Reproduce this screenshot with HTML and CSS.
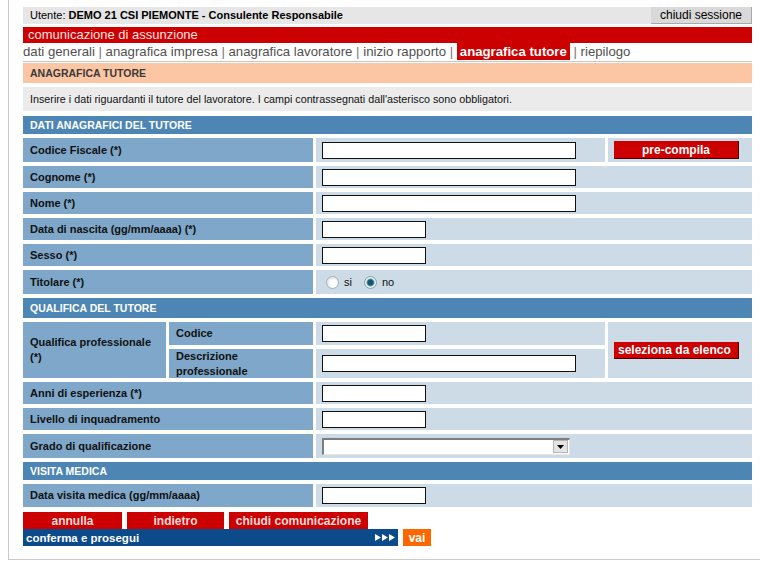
FILE: index.html
```html
<!DOCTYPE html>
<html lang="it">
<head>
<meta charset="utf-8">
<title>Anagrafica tutore</title>
<link rel="stylesheet" href="styles.css">
</head>
<body>
<div class="page">
  <div class="userbar">
    <span class="user">Utente: <b>DEMO 21 CSI PIEMONTE - Consulente Responsabile</b></span>
    <button class="btn-session" type="button">chiudi sessione</button>
  </div>
  <div class="titlebar">comunicazione di assunzione</div>
  <nav class="steps">dati generali <span class="sep">|</span> anagrafica impresa <span class="sep">|</span> anagrafica lavoratore <span class="sep">|</span> inizio rapporto <span class="sep">|</span> <span class="active">anagrafica tutore</span> <span class="sep">|</span> riepilogo</nav>
  <div class="section-title">ANAGRAFICA TUTORE</div>
  <div class="info">Inserire i dati riguardanti il tutore del lavoratore. I campi contrassegnati dall'asterisco sono obbligatori.</div>

  <div class="form">
    <div class="head">DATI ANAGRAFICI DEL TUTORE</div>

    <div class="lbl wide">Codice Fiscale (*)</div>
    <div class="val"><input class="in in-long" type="text"></div>
    <div class="val act"><button class="btn-red center" type="button">pre-compila</button></div>

    <div class="lbl wide">Cognome (*)</div>
    <div class="val full"><input class="in in-long" type="text"></div>

    <div class="lbl wide">Nome (*)</div>
    <div class="val full"><input class="in in-long" type="text"></div>

    <div class="lbl wide">Data di nascita (gg/mm/aaaa) (*)</div>
    <div class="val full"><input class="in in-short" type="text"></div>

    <div class="lbl wide">Sesso (*)</div>
    <div class="val full"><input class="in in-short" type="text"></div>

    <div class="lbl wide">Titolare (*)</div>
    <div class="val full radios">
      <label class="opt"><input class="radio" type="radio" name="tit"> si</label>
      <label class="opt"><input class="radio" type="radio" name="tit" checked> no</label>
    </div>

    <div class="head">QUALIFICA DEL TUTORE</div>

    <div class="lbl qual">Qualifica professionale (*)</div>
    <div class="lbl">Codice</div>
    <div class="val"><input class="in in-short" type="text"></div>
    <div class="val act qual-act"><button class="btn-red sel" type="button">seleziona da elenco</button></div>
    <div class="lbl">Descrizione professionale</div>
    <div class="val"><input class="in in-long" type="text"></div>

    <div class="lbl wide">Anni di esperienza (*)</div>
    <div class="val full"><input class="in in-short" type="text"></div>

    <div class="lbl wide">Livello di inquadramento</div>
    <div class="val full"><input class="in in-short" type="text"></div>

    <div class="lbl wide">Grado di qualificazione</div>
    <div class="val full">
      <div class="select">
        <span class="select-value"></span>
        <span class="select-arrow"><svg width="7" height="4" viewBox="0 0 7 4"><path d="M0 0H7L3.5 4Z" fill="#000"/></svg></span>
      </div>
    </div>

    <div class="head">VISITA MEDICA</div>

    <div class="lbl wide">Data visita medica (gg/mm/aaaa)</div>
    <div class="val full"><input class="in in-short" type="text"></div>
  </div>

  <div class="actions">
    <button class="btn-act w1" type="button">annulla</button>
    <button class="btn-act w2" type="button">indietro</button>
    <button class="btn-act w3" type="button">chiudi comunicazione</button>
  </div>
  <div class="submit">
    <div class="confirm">
      <span>conferma e prosegui</span>
      <svg class="arrows" width="21" height="7" viewBox="0 0 21 7"><path d="M0 0L6 3.5L0 7Z M7 0L13 3.5L7 7Z M14 0L20 3.5L14 7Z" fill="#fff"/></svg>
    </div>
    <button class="vai" type="button">vai</button>
  </div>
</div>
</body>
</html>
```

FILE: styles.css
```css
* { box-sizing: border-box; }

body {
  margin: 0;
  background: #fff;
  color: #000;
  font-family: "Liberation Sans", Arial, sans-serif;
}

.page {
  margin-left: 8px;
  width: 752px;
  border-left: 1px solid #cbcbcb;
  border-bottom: 1px solid #cbcbcb;
  padding: 7px 8px 13px 14px;
}

.userbar {
  display: flex;
  justify-content: space-between;
  height: 17px;
  background: #e6e6e6;
  font-size: 11px;
}

.user {
  padding-left: 7px;
  line-height: 17px;
}

.btn-session {
  width: 101px;
  height: 17px;
  padding: 0;
  border: 0;
  border-right: 1px solid #a9a9a9;
  border-bottom: 1px solid #a9a9a9;
  background: #d9d9d9;
  color: #000;
  font: 12px "Liberation Sans", Arial, sans-serif;
}

.titlebar {
  margin-top: 3px;
  height: 16px;
  line-height: 16px;
  padding-left: 5px;
  background: #cc0000;
  color: #ffe2e2;
  font-size: 13px;
}

.steps {
  height: 19px;
  line-height: 18px;
  border-bottom: 1px solid #c8c8c8;
  font-size: 13.2px;
  color: #505050;
  white-space: nowrap;
}

.steps .sep {
  color: #777;
}

.steps .active {
  padding: 1px 3px;
  background: #cc0000;
  color: #fff;
  font-weight: bold;
}

.section-title {
  margin-top: 1px;
  height: 20px;
  line-height: 20px;
  padding-left: 7px;
  background: #fcc5a3;
  color: #3a3a3a;
  font-size: 10.5px;
  font-weight: bold;
}

.info {
  margin-top: 4px;
  height: 24px;
  line-height: 24px;
  padding-left: 7px;
  background: #ebebeb;
  color: #111;
  font-size: 10.75px;
}

.form {
  margin-top: 5px;
  display: grid;
  grid-template-columns: 143px 144px 289px 144px;
  grid-template-rows: 18px 24px 22px 22px 22px 22px 24px 20px 23px 29px 22px 22px 24px 18px 23px;
  column-gap: 3px;
  row-gap: 4px;
}

.head {
  grid-column: 1 / -1;
  display: flex;
  align-items: center;
  padding-left: 7px;
  background: #4d86b5;
  color: #fff;
  font-size: 10.5px;
  font-weight: bold;
}

.lbl {
  display: flex;
  align-items: center;
  padding: 0 6px 0 7px;
  background: #7ea7c9;
  color: #111;
  font-size: 11px;
  font-weight: bold;
  line-height: 15px;
}

.lbl.wide {
  grid-column: 1 / 3;
}

.lbl.qual {
  grid-row: span 2;
}

.val {
  display: flex;
  align-items: center;
  padding-left: 6px;
  background: #cddbe7;
}

.val.full {
  grid-column: 3 / 5;
}

.qual-act {
  grid-row: span 2;
}

.in {
  height: 17px;
  padding: 0 2px;
  border: 1px solid #111;
  background: #fff;
}

.in-long { width: 254px; }
.in-short { width: 104px; }

.btn-red {
  width: 125px;
  height: 18px;
  padding: 0;
  border: 0;
  border-right: 1px solid #4a0000;
  border-bottom: 1px solid #4a0000;
  background: #cc0000;
  color: #fff;
  font: bold 12px "Liberation Sans", Arial, sans-serif;
}

.btn-red.sel {
  height: 17px;
  text-align: left;
  padding-left: 4px;
}

.radios {
  gap: 8px;
  font-size: 11px;
  color: #111;
}

.opt {
  display: flex;
  align-items: center;
  gap: 5px;
  padding-left: 4px;
}

.radio {
  appearance: none;
  -webkit-appearance: none;
  margin: 0;
  width: 13px;
  height: 13px;
  border-radius: 50%;
  border: 1px solid #a7b0b8;
  background: radial-gradient(circle at 60% 60%, #fff 0 3px, #e4e8ec 6px);
}

.radio:checked {
  border-color: #8aa0b0;
  background: radial-gradient(circle, #10586c 0 2.5px, #5f9ab0 3.5px, #eef2f5 4.5px, #dfe5ea 6px);
}

.select {
  display: flex;
  align-items: center;
  width: 248px;
  height: 17px;
  border-top: 2px solid #7d7d7d;
  border-left: 2px solid #7d7d7d;
  border-right: 1px solid #e6e6e6;
  border-bottom: 1px solid #e6e6e6;
  background: #fff;
}

.select-value {
  flex: 1;
}

.select-arrow {
  display: flex;
  align-items: center;
  justify-content: center;
  width: 15px;
  height: 13px;
  margin-right: 1px;
  border: 1px solid #b5b5b5;
  background: #e4e4e4;
}

.actions {
  margin-top: 5px;
  display: flex;
  gap: 5px;
}

.btn-act {
  height: 17px;
  padding: 0;
  border: 0;
  background: #cc0000;
  color: #ffdcdc;
  font: bold 12px "Liberation Sans", Arial, sans-serif;
}

.w1 { width: 99px; }
.w2 { width: 97px; }
.w3 { width: 139px; }

.submit {
  display: flex;
  gap: 5px;
}

.confirm {
  display: flex;
  justify-content: space-between;
  align-items: center;
  width: 375px;
  height: 17px;
  padding: 0 2px 0 3px;
  background: #0b4b8b;
  color: #fff;
  font-size: 11.5px;
  font-weight: bold;
}

.vai {
  width: 28px;
  height: 17px;
  padding: 0;
  border: 0;
  background: #ff6600;
  color: #fff;
  font: bold 12px "Liberation Sans", Arial, sans-serif;
}
```
